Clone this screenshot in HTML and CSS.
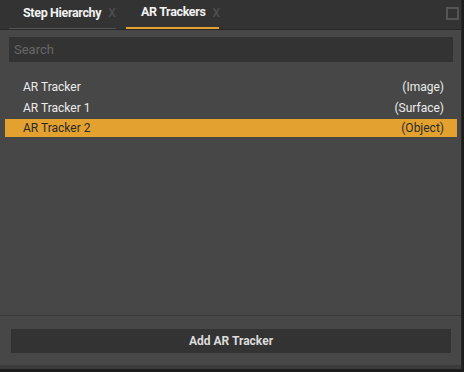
FILE: index.html
```html
<!DOCTYPE html>
<html lang="en">
<head>
  <meta charset="UTF-8">
  <title>AR Trackers</title>
  <link rel="stylesheet" href="styles.css">
</head>
<body>

  <div class="window">
    <div class="tabs">
      <div class="tab tab-first">
        <span class="tab-label">Step Hierarchy</span>
        <span class="tab-close">X</span>
      </div>
      <div class="tab tab-active">
        <span class="tab-label">AR Trackers</span>
        <span class="tab-close">X</span>
      </div>
      <div class="maximize"></div>
    </div>

    <div class="panel">
      <input class="search" type="text" placeholder="Search">

      <ul class="list">
        <li class="row">
          <span>AR Tracker</span>
          <span>(Image)</span>
        </li>
        <li class="row">
          <span>AR Tracker 1</span>
          <span>(Surface)</span>
        </li>
        <li class="row selected">
          <span>AR Tracker 2</span>
          <span>(Object)</span>
        </li>
      </ul>

      <div class="footer">
        <button class="add-btn">Add AR Tracker</button>
      </div>
    </div>
  </div>

</body>
</html>
```

FILE: styles.css
```css
body {
  margin: 0;
  background-color: #1c1c1c;
  font-family: Roboto, "Noto Sans", sans-serif;
}

.window {
  width: 461px;
  height: 369px;
  border-right: 1px solid #262626;
  display: flex;
  flex-direction: column;
}

.tabs {
  display: flex;
  height: 30px;
  box-sizing: border-box;
  padding-left: 9px;
  background-color: #333333;
  border-bottom: 1px solid #292929;
}

.tab {
  display: flex;
  align-items: center;
  gap: 7px;
  flex-shrink: 0;
  height: 29px;
  box-sizing: border-box;
  padding-bottom: 4px;
  white-space: nowrap;
}

.tab-first {
  width: 107px;
  padding-left: 14px;
  border-bottom: 1px solid #555555;
}

.tab-active {
  width: 93px;
  margin-left: 10px;
  padding-left: 15px;
  border-bottom: 2px solid #e3a130;
}

.tab-label {
  color: #f2f2f2;
  font-size: 12.5px;
  font-weight: bold;
  letter-spacing: -0.35px;
}

.tab-close {
  color: #555555;
  font-size: 12px;
  margin-top: 2px;
}

.maximize {
  width: 13px;
  height: 13px;
  box-sizing: border-box;
  border: 2px solid #555555;
  margin: 7px 2px 0 auto;
}

.panel {
  flex: 1;
  display: flex;
  flex-direction: column;
  background-color: #474747;
  border-bottom: 4px solid #3b3b3b;
}

.search {
  margin: 7px 8px 0 9px;
  height: 25px;
  box-sizing: border-box;
  padding: 0 5px;
  border: none;
  outline: none;
  background-color: #333333;
  color: #dddddd;
  font-family: inherit;
  font-size: 13px;
}

.search::placeholder {
  color: #676767;
}

.list {
  flex: 1;
  list-style: none;
  margin: 16px 4px 0 5px;
  padding: 0;
  display: flex;
  flex-direction: column;
  gap: 2.5px;
}

.row {
  display: flex;
  justify-content: space-between;
  align-items: center;
  height: 18px;
  padding: 0 13px 0 18px;
  color: #ececec;
  font-size: 12px;
}

.selected {
  background-color: #e3a130;
  color: #2a2a2a;
}

.footer {
  border-top: 1px solid #3a3a3a;
  padding: 13px 10px 12px 11px;
}

.add-btn {
  display: block;
  width: 100%;
  height: 24px;
  border: none;
  background-color: #333333;
  color: #dcdcdc;
  font-family: inherit;
  font-size: 12px;
  font-weight: bold;
  cursor: pointer;
}
```
